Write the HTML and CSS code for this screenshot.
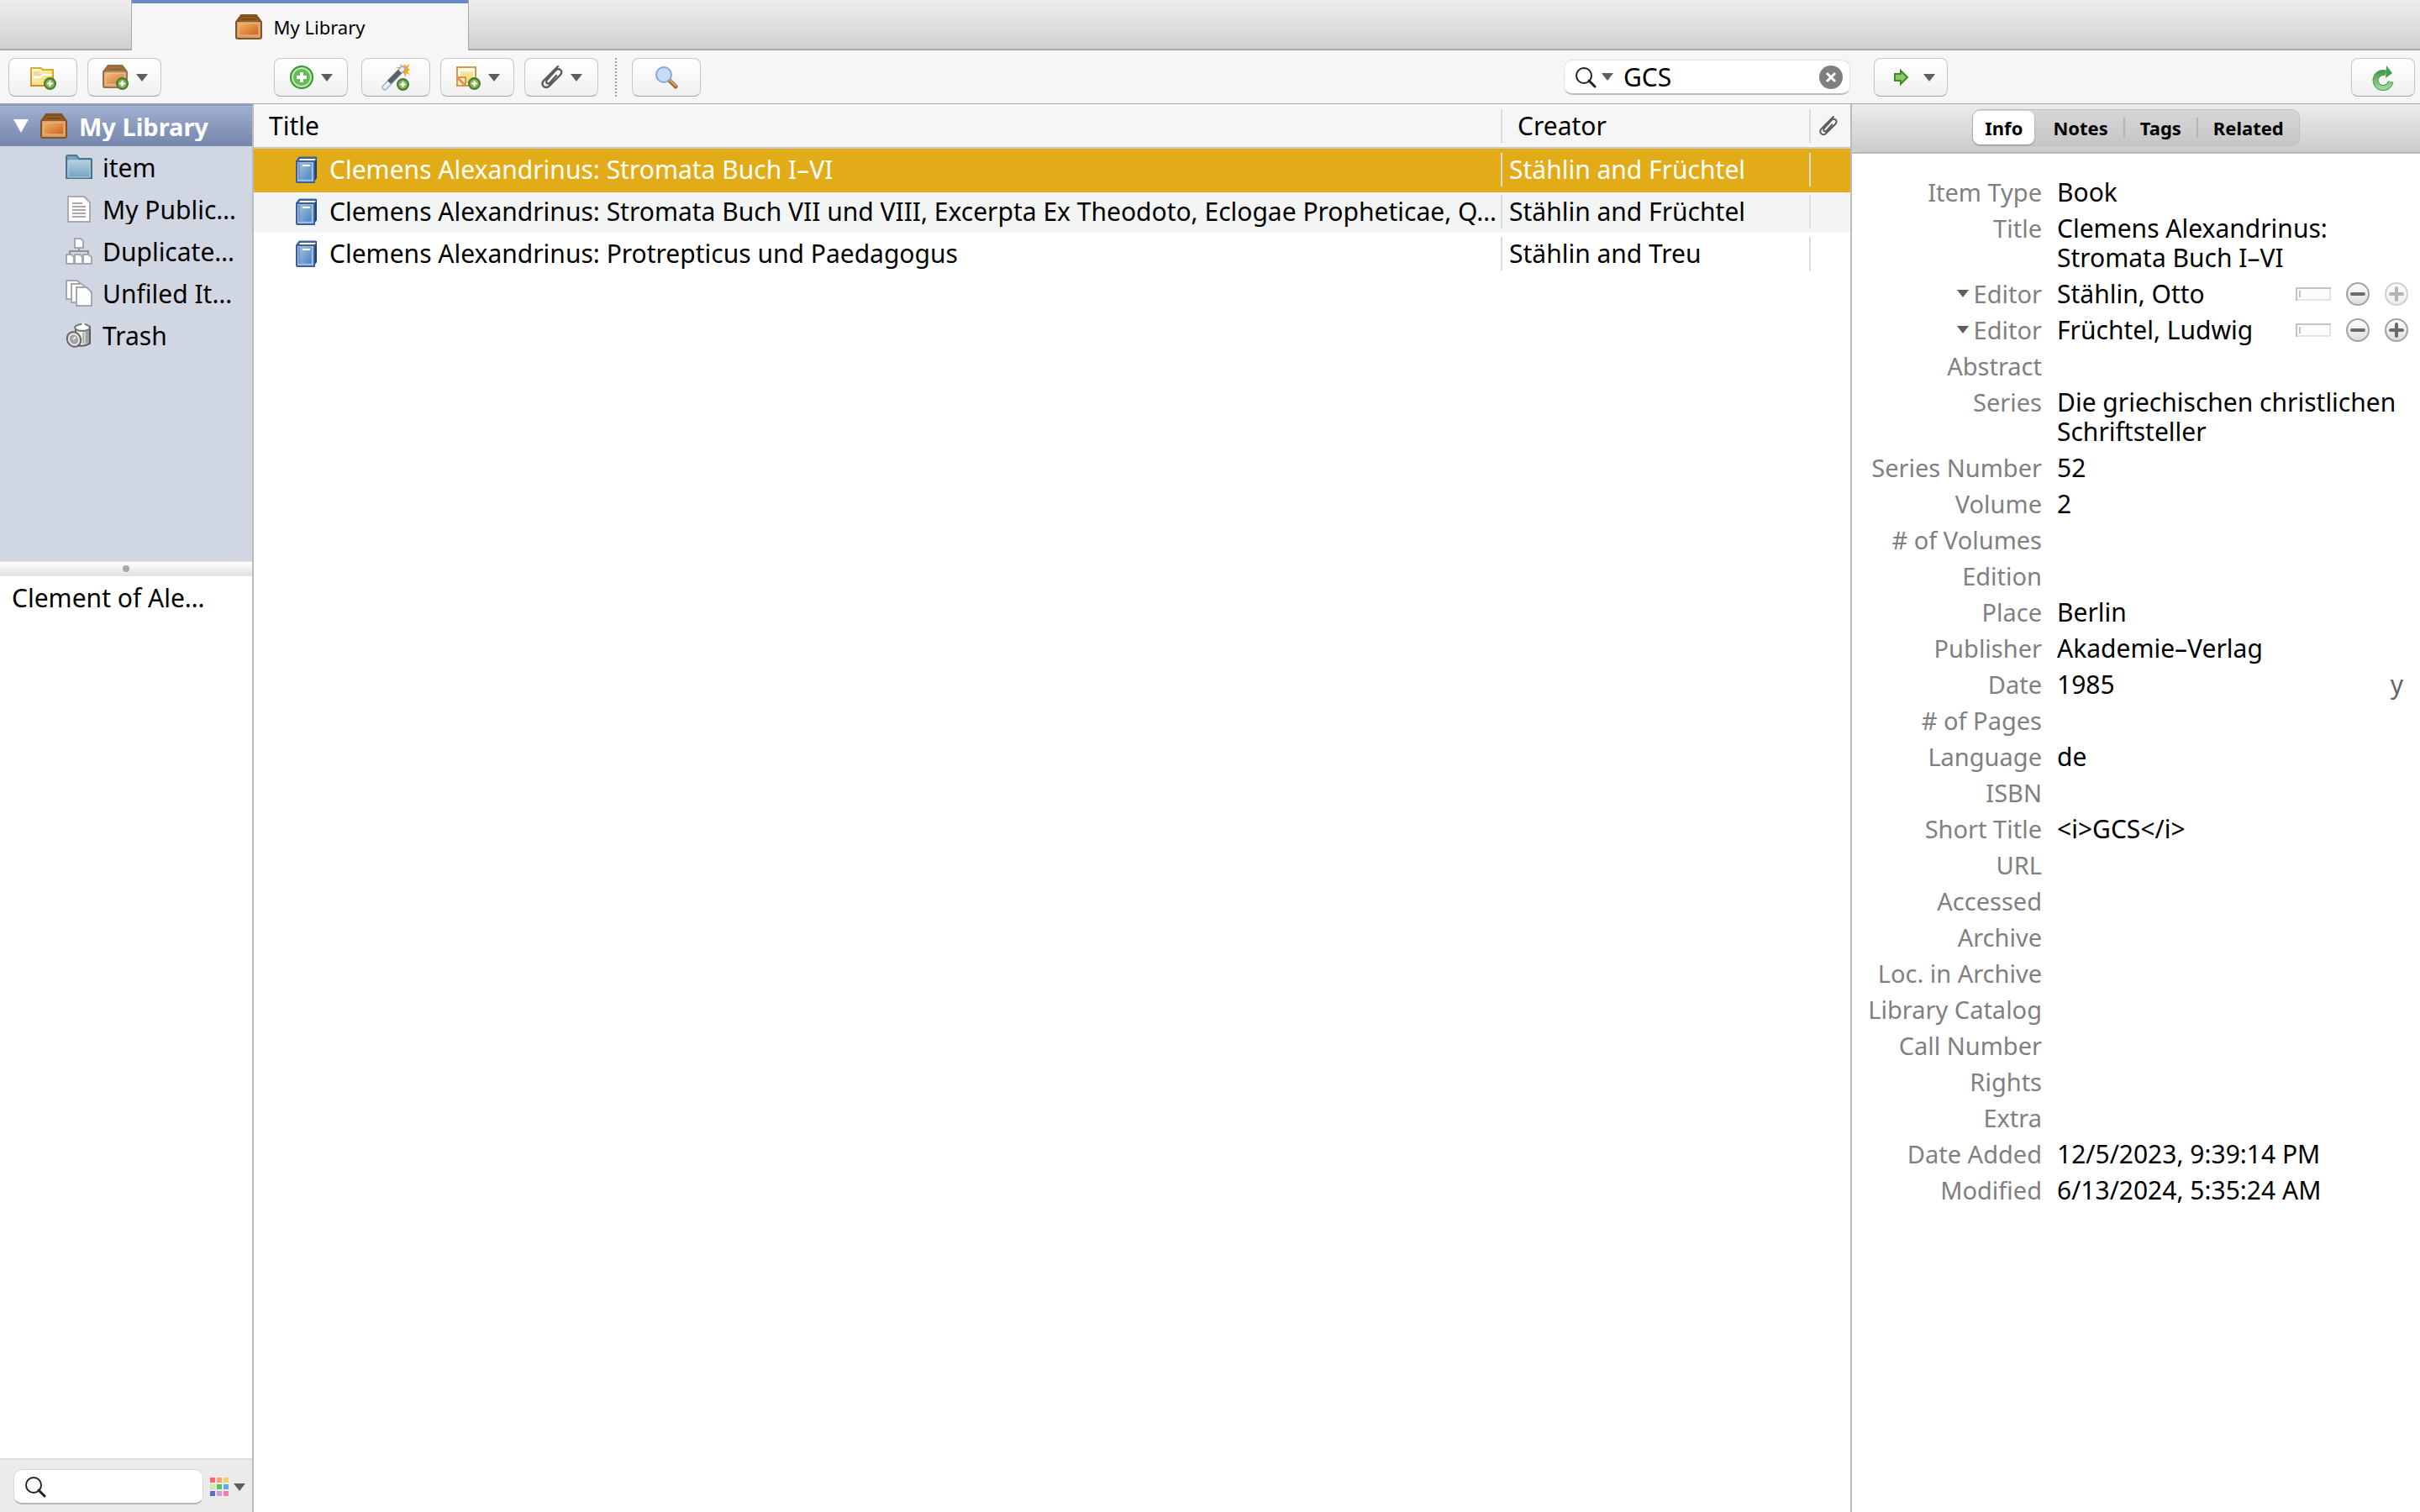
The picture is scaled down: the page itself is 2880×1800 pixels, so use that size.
FILE: index.html
```html
<!DOCTYPE html>
<html lang="en">
<head>
    <meta charset="UTF-8">
    <meta name="viewport" content="width=device-width, initial-scale=1.0">
    <title>My Library</title>
    <link rel="stylesheet" href="styles.css">
</head>
<body>
    <!-- Shared icons -->
    <svg class="icon-defs" aria-hidden="true">
        <defs>
            <linearGradient id="boxFill" x1="0" y1="0" x2="1" y2="1">
                <stop offset="0" stop-color="#edb560"/>
                <stop offset="1" stop-color="#cf6026"/>
            </linearGradient>
            <linearGradient id="bookFill" x1="0" y1="0" x2="1" y2="1">
                <stop offset="0" stop-color="#a3c3dd"/>
                <stop offset="1" stop-color="#4a83c4"/>
            </linearGradient>
            <linearGradient id="folderFill" x1="0" y1="0" x2="0" y2="1">
                <stop offset="0" stop-color="#b4d0e0"/>
                <stop offset="1" stop-color="#74a5c2"/>
            </linearGradient>
            <linearGradient id="yellowFill" x1="0" y1="0" x2="1" y2="1">
                <stop offset="0" stop-color="#fffdf0"/>
                <stop offset="1" stop-color="#f0d23c"/>
            </linearGradient>
            <linearGradient id="yellowEdge" x1="0" y1="0" x2="0" y2="1">
                <stop offset="0" stop-color="#d8b030"/>
                <stop offset="1" stop-color="#dc8a28"/>
            </linearGradient>
            <linearGradient id="noteFill" x1="0" y1="0" x2="0" y2="1">
                <stop offset="0" stop-color="#f6eaa6"/>
                <stop offset="1" stop-color="#ecd465"/>
            </linearGradient>
            <linearGradient id="greenFill" x1="0" y1="0" x2="0" y2="1">
                <stop offset="0" stop-color="#4d9e52"/>
                <stop offset="1" stop-color="#9fd694"/>
            </linearGradient>
            <linearGradient id="canFill" x1="0" y1="0" x2="1" y2="0">
                <stop offset="0" stop-color="#dcdcdc"/>
                <stop offset="0.4" stop-color="#f4f4f4"/>
                <stop offset="1" stop-color="#8e8e8e"/>
            </linearGradient>
            <linearGradient id="knobFill" x1="0" y1="0" x2="0" y2="1">
                <stop offset="0" stop-color="#ffffff"/>
                <stop offset="1" stop-color="#dcdcdc"/>
            </linearGradient>
        </defs>
        <symbol id="icon-box" viewBox="0 0 32 30">
            <path d="M1 9 7 1h18l6 8v18q0 2-2 2H3q-2 0-2-2z" fill="#d99a6c" stroke="#85561b" stroke-width="2"/>
            <path d="M2 9 7 2h18l5 7z" fill="#7c4a14"/>
            <path d="M5 8 8 4h16l3 4z" fill="none" stroke="#a97335" stroke-width="1"/>
            <path d="M4 11h24v14H4z" fill="url(#boxFill)" stroke="#e8bd8f" stroke-width="1"/>
        </symbol>
        <symbol id="icon-badge" viewBox="0 0 14 14">
            <circle cx="7" cy="7" r="6" fill="#86b35c" stroke="#477c2c" stroke-width="2"/>
            <path d="M7 4v6M4 7h6" stroke="#fff" stroke-width="2"/>
        </symbol>
        <symbol id="icon-book" viewBox="0 0 26 32">
            <path d="M4 1h21v25l-3 4V6H2z" fill="#233d66"/>
            <path d="M1 5 4 1h20v4l-3 3H1z" fill="#40659f" stroke="#3b5f9b" stroke-width="1"/>
            <path d="M5 3h19l-2 2H4z" fill="#fff"/>
            <path d="M1 6h21v25H2q-1 0-1-1z" fill="#a5c4e3" stroke="#3b5f9b" stroke-width="2"/>
            <path d="M4 8h15v20H4z" fill="url(#bookFill)" stroke="#88aed6" stroke-width="1"/>
            <path d="M4 8v20" stroke="#4f7aa8" stroke-width="1"/>
            <path d="M8 11h9" stroke="#fff" stroke-width="2"/>
        </symbol>
        <symbol id="icon-clip" viewBox="0 0 26 28">
            <path d="M20 1 3 18c-4 5 1 10 6 7L23 11c4-5-2-9-6-5L7 17c-3 4 2 6 4 3l7-8" fill="none" stroke="#5c5c5c" stroke-width="2.4" stroke-linecap="round"/>
        </symbol>
        <symbol id="icon-find" viewBox="0 0 26 26">
            <circle cx="11" cy="11" r="9" fill="none" stroke="#222" stroke-width="2"/>
            <path d="m17 17 7 7" stroke="#222" stroke-width="3" stroke-linecap="round"/>
        </symbol>
        <symbol id="icon-caret" viewBox="0 0 14 9">
            <path d="M0 0h14L7 9z" fill="#5e5e5e"/>
        </symbol>
        <symbol id="icon-minus" viewBox="0 0 28 28">
            <circle cx="14" cy="14" r="13" fill="url(#knobFill)" stroke="#a3a3a3" stroke-width="2"/>
            <path d="M7 14h14" stroke="#6b6b6b" stroke-width="4" stroke-linecap="round"/>
        </symbol>
        <symbol id="icon-plus" viewBox="0 0 28 28">
            <circle cx="14" cy="14" r="13" fill="url(#knobFill)" stroke="#a3a3a3" stroke-width="2"/>
            <path d="M7 14h14M14 7v14" stroke="#6b6b6b" stroke-width="4" stroke-linecap="round"/>
        </symbol>
        <symbol id="icon-field" viewBox="0 0 42 16">
            <path d="M1 1h40v14H1z" fill="#fcfcfc" stroke="#e4e4e4" stroke-width="2"/>
            <path d="M1 16V1h41" fill="none" stroke="#c4c4c4" stroke-width="2"/>
            <path d="M5 4v8" stroke="#c4c4c4" stroke-width="2"/>
        </symbol>
    </svg>

    <!-- Tabs -->
    <header class="tab-bar">
        <div class="tab-spacer"></div>
        <button class="tab">
            <svg class="icon-library"><use href="#icon-box"/></svg>
            My Library
        </button>
        <div class="tab-filler"></div>
    </header>

    <!-- Toolbar -->
    <div class="toolbar">
        <div class="tools tools-collections">
            <button class="tool" aria-label="New Collection">
                <svg width="32" height="30" viewBox="0 0 32 30">
                    <path d="M2 25V4h12l2 2h12v19z" fill="url(#yellowFill)" stroke="url(#yellowEdge)" stroke-width="2"/>
                    <path d="M5 13V8h7v3h6v2z" fill="#f0d795"/>
                    <path d="M5 15h8l3-3h11" fill="none" stroke="#fff" stroke-width="2"/>
                    <use href="#icon-badge" x="17" y="15" width="15" height="15"/>
                </svg>
            </button>
            <button class="tool tool-menu" aria-label="New Library">
                <svg width="32" height="30" viewBox="0 0 32 30">
                    <use href="#icon-box" x="0" y="0" width="32" height="28" opacity="0.85"/>
                    <use href="#icon-badge" x="17" y="15" width="15" height="15"/>
                </svg>
                <svg class="caret"><use href="#icon-caret"/></svg>
            </button>
        </div>
        <div class="tools tools-items">
            <button class="tool tool-menu tool-add" aria-label="New Item">
                <svg width="28" height="28" viewBox="0 0 28 28">
                    <circle cx="14" cy="14" r="13" fill="#bfe5b2" stroke="#38962e" stroke-width="2"/>
                    <circle cx="14" cy="14" r="10" fill="#66bb57"/>
                    <path d="M14 8v12M8 14h12" stroke="#fff" stroke-width="4"/>
                </svg>
                <svg class="caret"><use href="#icon-caret"/></svg>
            </button>
            <button class="tool" aria-label="Add Item by Identifier">
                <svg width="34" height="32" viewBox="0 0 34 32">
                    <path d="m24 7-7-3 6 0-1-4 4 3 2-3 1 3 5-3-3 5 3 2-3 2 3 4-5-2 0 5z" fill="#f7a51d"/>
                    <path d="M4 28 25 6" stroke="#9db4c8" stroke-width="7" stroke-linecap="round"/>
                    <path d="M4 28 25 6" stroke="#e9f1f7" stroke-width="4" stroke-linecap="round"/>
                    <path d="M9 22 22 9" stroke="#5d5f63" stroke-width="6"/>
                    <use href="#icon-badge" x="18" y="17" width="15" height="15"/>
                </svg>
            </button>
            <button class="tool tool-menu" aria-label="New Note">
                <svg width="30" height="30" viewBox="0 0 30 30">
                    <path d="M2 3h22v22H2z" fill="#fffbe8" stroke="#dc9550" stroke-width="2"/>
                    <path d="M6 8h15v14H6z" fill="url(#noteFill)"/>
                    <path d="M2 15h10v10H2z" fill="#fbead2" stroke="#dc9550" stroke-width="2"/>
                    <path d="m3 16 8 8" stroke="#dc9550" stroke-width="3"/>
                    <use href="#icon-badge" x="15" y="15" width="15" height="15"/>
                </svg>
                <svg class="caret"><use href="#icon-caret"/></svg>
            </button>
            <button class="tool tool-menu" aria-label="Add Attachment">
                <svg width="26" height="28"><use href="#icon-clip"/></svg>
                <svg class="caret"><use href="#icon-caret"/></svg>
            </button>
            <div class="separator"></div>
            <button class="tool" aria-label="Advanced Search">
                <svg width="28" height="28" viewBox="0 0 28 28">
                    <path d="m18 18 7 7" stroke="#a06a30" stroke-width="5" stroke-linecap="round"/>
                    <path d="m19 18 6 6" stroke="#d6a873" stroke-width="2" stroke-linecap="round"/>
                    <circle cx="11" cy="11" r="9" fill="#c6dbf5" stroke="#8aa6d3" stroke-width="2"/>
                </svg>
            </button>
            <div class="search">
                <svg width="26" height="26"><use href="#icon-find"/></svg>
                <svg class="caret"><use href="#icon-caret"/></svg>
                <input class="search-input" type="text" value="GCS" aria-label="Search">
                <button class="clear" aria-label="Clear">
                    <svg width="28" height="28" viewBox="0 0 28 28">
                        <circle cx="14" cy="14" r="14" fill="#7f7f7f"/>
                        <path d="m9 9 10 10M19 9 9 19" stroke="#fff" stroke-width="3"/>
                    </svg>
                </button>
            </div>
        </div>
        <div class="tools tools-item">
            <button class="tool tool-menu tool-locate" aria-label="Locate">
                <svg width="20" height="20" viewBox="0 0 20 20">
                    <path d="M2 6h7V2l8 8-8 8v-4H2z" fill="#8cc66f" stroke="#3f8d1d" stroke-width="2"/>
                </svg>
                <svg class="caret"><use href="#icon-caret"/></svg>
            </button>
            <button class="tool tool-sync" aria-label="Sync">
                <svg width="26" height="32" viewBox="0 0 26 32">
                    <path d="M22 21a9 9 0 1 1-6-10" fill="none" stroke="#4a9a4f" stroke-width="7"/>
                    <path d="M22 21a9 9 0 1 1-6-10" fill="none" stroke="url(#greenFill)" stroke-width="5"/>
                    <path d="m17 2 7 9-8 6z" fill="#4a9a4f"/>
                </svg>
            </button>
        </div>
    </div>

    <main class="panes">
        <!-- Collections and tags -->
        <aside class="sidebar">
            <ul class="collections">
                <li class="collection collection-root">
                    <svg class="twisty" viewBox="0 0 18 16"><path d="M0 0h18L9 16z" fill="#fff"/></svg>
                    <svg class="icon-library"><use href="#icon-box"/></svg>
                    <span>My Library</span>
                </li>
                <li class="collection">
                    <svg class="icon-row" viewBox="0 0 32 32">
                        <path d="M1 29V4q0-2 2-2h10l3 4h14q1 0 1 1v22z" fill="#7ba2bc" stroke="#4a7490" stroke-width="2"/>
                        <path d="M3 8h26v20H3z" fill="url(#folderFill)" stroke="#bcd6e4" stroke-width="1"/>
                    </svg>
                    <span>item</span>
                </li>
                <li class="collection">
                    <svg class="icon-row" viewBox="0 0 32 32">
                        <path d="M3 1h19l7 7v23H3z" fill="#fff" stroke="#a6aab2" stroke-width="2"/>
                        <path d="M8 9h12M8 13h16M8 17h16M8 21h16M8 25h16" stroke="#a9a9a9" stroke-width="2"/>
                    </svg>
                    <span>My Public…</span>
                </li>
                <li class="collection">
                    <svg class="icon-row" viewBox="0 0 32 32">
                        <path d="M16 12v5M5 19v-3h22v3" fill="none" stroke="#8d9097" stroke-width="2"/>
                        <path d="M11 1h7l3 3v8H11zM1 20h6l3 3v8H1zM11 20h6l3 3v8h-9zM21 20h6l4 3v8H21z" fill="#fff" stroke="#a3a7b0" stroke-width="2"/>
                    </svg>
                    <span>Duplicate…</span>
                </li>
                <li class="collection">
                    <svg class="icon-row" viewBox="0 0 32 32">
                        <path d="M1 1h13l5 5v17H1z" fill="#fff" stroke="#a3a7b0" stroke-width="2"/>
                        <path d="M7 5h12l6 5v17H7z" fill="#fff" stroke="#a3a7b0" stroke-width="2"/>
                        <path d="M13 9h12l6 6v16H13z" fill="#fff" stroke="#a3a7b0" stroke-width="2"/>
                    </svg>
                    <span>Unfiled It…</span>
                </li>
                <li class="collection">
                    <svg class="icon-row" viewBox="0 0 32 32">
                        <path d="M12 6v21q8 4 17-1V6z" fill="url(#canFill)" stroke="#5c5c5c" stroke-width="2"/>
                        <path d="M21 13v13M25 12v13" stroke="#8a8a8a" stroke-width="1"/>
                        <ellipse cx="20" cy="7" rx="9" ry="4" fill="#eee" stroke="#777" stroke-width="2"/>
                        <path d="m15 7 4-3 2-4 2 4 4 3-6 2z" fill="#fff"/>
                        <ellipse cx="10" cy="21" rx="8" ry="9" fill="#e0e0e0" stroke="#666" stroke-width="2" transform="rotate(-30 10 21)"/>
                        <ellipse cx="10" cy="21" rx="4" ry="5" fill="#a8a8a8" stroke="#888" stroke-width="1" transform="rotate(-30 10 21)"/>
                        <path d="m9 21 3-3" stroke="#eee" stroke-width="2"/>
                    </svg>
                    <span>Trash</span>
                </li>
            </ul>
            <div class="splitter"><span class="grip"></span></div>
            <div class="tags">
                <div class="tag">Clement of Ale…</div>
            </div>
            <div class="tag-footer">
                <label class="tag-search">
                    <svg width="26" height="26"><use href="#icon-find"/></svg>
                    <input class="search-input" type="text" aria-label="Filter tags">
                </label>
                <button class="swatches" aria-label="Tag actions">
                    <svg width="22" height="22" viewBox="0 0 22 22">
                        <path d="M0 0h6v6H0z" fill="#ff6666"/>
                        <path d="M8 0h6v6H8z" fill="#ffa366"/>
                        <path d="M16 0h6v6h-6z" fill="#f0d35c"/>
                        <path d="M0 8h6v6H0z" fill="#cfe8a6"/>
                        <path d="M8 8h6v6H8z" fill="#4dc964"/>
                        <path d="M16 8h6v6h-6z" fill="#5cabe8"/>
                        <path d="M0 16h6v6H0z" fill="#5577b0"/>
                        <path d="M8 16h6v6H8z" fill="#d597dc"/>
                        <path d="M16 16h6v6h-6z" fill="#ff75ad"/>
                    </svg>
                    <svg class="caret"><use href="#icon-caret"/></svg>
                </button>
            </div>
        </aside>

        <!-- Items -->
        <section class="items">
            <table class="item-table">
                <colgroup>
                    <col>
                    <col class="col-creator">
                    <col class="col-attachment">
                </colgroup>
                <thead>
                    <tr>
                        <th><div class="head-cell">Title</div></th>
                        <th><div class="head-cell divided">Creator</div></th>
                        <th><div class="head-cell divided clip-cell"><svg width="22" height="24" aria-label="Attachments"><use href="#icon-clip"/></svg></div></th>
                    </tr>
                </thead>
                <tbody>
                    <tr class="selected">
                        <td><div class="cell title-cell"><svg class="icon-book"><use href="#icon-book"/></svg><span>Clemens Alexandrinus: Stromata Buch I–VI</span></div></td>
                        <td><div class="cell divided">Stählin and Früchtel</div></td>
                        <td><div class="cell divided"></div></td>
                    </tr>
                    <tr class="odd">
                        <td><div class="cell title-cell"><svg class="icon-book"><use href="#icon-book"/></svg><span>Clemens Alexandrinus: Stromata Buch VII und VIII, Excerpta Ex Theodoto, Eclogae Propheticae, Q…</span></div></td>
                        <td><div class="cell divided">Stählin and Früchtel</div></td>
                        <td><div class="cell divided"></div></td>
                    </tr>
                    <tr>
                        <td><div class="cell title-cell"><svg class="icon-book"><use href="#icon-book"/></svg><span>Clemens Alexandrinus: Protrepticus und Paedagogus</span></div></td>
                        <td><div class="cell divided">Stählin and Treu</div></td>
                        <td><div class="cell divided"></div></td>
                    </tr>
                </tbody>
            </table>
        </section>

        <!-- Item details -->
        <aside class="details">
            <nav class="detail-tabs">
                <div class="segments">
                    <button class="segment active">Info</button>
                    <button class="segment">Notes</button>
                    <button class="segment ruled">Tags</button>
                    <button class="segment ruled">Related</button>
                </div>
            </nav>
            <dl class="fields">
                <dt>Item Type</dt><dd>Book</dd>
                <dt>Title</dt><dd>Clemens Alexandrinus: Stromata Buch I–VI</dd>
                <dt><svg class="caret-small"><use href="#icon-caret"/></svg>Editor</dt>
                <dd class="creator">
                    <span class="creator-name">Stählin, Otto</span>
                    <button class="mini" aria-label="Switch to single field"><svg width="42" height="16"><use href="#icon-field"/></svg></button>
                    <button class="mini" aria-label="Remove"><svg width="28" height="28"><use href="#icon-minus"/></svg></button>
                    <button class="mini faded" aria-label="Add" disabled><svg width="28" height="28"><use href="#icon-plus"/></svg></button>
                </dd>
                <dt><svg class="caret-small"><use href="#icon-caret"/></svg>Editor</dt>
                <dd class="creator">
                    <span class="creator-name">Früchtel, Ludwig</span>
                    <button class="mini" aria-label="Switch to single field"><svg width="42" height="16"><use href="#icon-field"/></svg></button>
                    <button class="mini" aria-label="Remove"><svg width="28" height="28"><use href="#icon-minus"/></svg></button>
                    <button class="mini" aria-label="Add"><svg width="28" height="28"><use href="#icon-plus"/></svg></button>
                </dd>
                <dt>Abstract</dt><dd></dd>
                <dt>Series</dt><dd>Die griechischen christlichen Schriftsteller</dd>
                <dt>Series Number</dt><dd>52</dd>
                <dt>Volume</dt><dd>2</dd>
                <dt># of Volumes</dt><dd></dd>
                <dt>Edition</dt><dd></dd>
                <dt>Place</dt><dd>Berlin</dd>
                <dt>Publisher</dt><dd>Akademie–Verlag</dd>
                <dt>Date</dt><dd class="date">1985 <span class="date-order">y</span></dd>
                <dt># of Pages</dt><dd></dd>
                <dt>Language</dt><dd>de</dd>
                <dt>ISBN</dt><dd></dd>
                <dt>Short Title</dt><dd>&lt;i&gt;GCS&lt;/i&gt;</dd>
                <dt>URL</dt><dd></dd>
                <dt>Accessed</dt><dd></dd>
                <dt>Archive</dt><dd></dd>
                <dt>Loc. in Archive</dt><dd></dd>
                <dt>Library Catalog</dt><dd></dd>
                <dt>Call Number</dt><dd></dd>
                <dt>Rights</dt><dd></dd>
                <dt>Extra</dt><dd></dd>
                <dt>Date Added</dt><dd>12/5/2023, 9:39:14 PM</dd>
                <dt>Modified</dt><dd>6/13/2024, 5:35:24 AM</dd>
            </dl>
        </aside>
    </main>
</body>
</html>
```
FILE: styles.css
```css
/* Basic Reset & Body Styling */
* {
    margin: 0;
    padding: 0;
    box-sizing: border-box;
}

body {
    display: flex;
    flex-direction: column;
    height: 100vh;
    overflow: hidden;
    font-family: 'Lucida Grande', 'Noto Sans', sans-serif;
    font-size: 30px;
    line-height: 35px;
    color: #000;
    background-color: #fff;
}

button,
input {
    font: inherit;
    color: inherit;
    border: none;
    background: none;
}

svg {
    display: block;
    flex: none;
}

.icon-defs {
    position: absolute;
    width: 0;
    height: 0;
}

.icon-library {
    width: 32px;
    height: 30px;
}

.icon-row {
    width: 32px;
    height: 32px;
}

.icon-book {
    width: 26px;
    height: 32px;
}

.caret {
    width: 14px;
    height: 9px;
}

.caret-small {
    width: 14px;
    height: 9px;
}

/* Tab Bar */
.tab-bar {
    display: flex;
    height: 60px;
    flex: none;
    background-color: #f6f6f6;
}

.tab-spacer,
.tab-filler {
    background: linear-gradient(to bottom, #eee, #d1d1d1);
    border-bottom: 2px solid #a9a9a9;
}

.tab-spacer {
    width: 157px;
    border-right: 1px solid #a9a9a9;
}

.tab-filler {
    flex: 1;
    border-left: 1px solid #a9a9a9;
}

.tab {
    display: flex;
    align-items: center;
    justify-content: center;
    gap: 14px;
    width: 400px;
    border-top: 4px solid #668ac6;
    font-size: 22px;
}

/* Toolbar */
.toolbar {
    display: flex;
    height: 64px;
    flex: none;
    background-color: #f6f6f6;
    border-bottom: 1px solid #a9a9a9;
}

.tools {
    display: flex;
    align-items: center;
    gap: 12px;
    padding-top: 1px;
}

.tools-collections {
    width: 302px;
    padding-left: 10px;
}

.tools-items {
    flex: 1;
    padding-left: 24px;
}

.tools-item {
    width: 678px;
    padding: 1px 6px 0 28px;
    justify-content: space-between;
}

.tool {
    display: flex;
    align-items: center;
    justify-content: center;
    gap: 9px;
    width: 82px;
    height: 46px;
    border: 1px solid #c6c6c6;
    border-bottom-color: #a2a2a2;
    border-radius: 8px;
    background: linear-gradient(to bottom, #fff, #f0f0f0);
}

.tool-menu {
    width: 88px;
}

.tool-add {
    margin-right: 4px;
}

.tool-locate {
    gap: 16px;
    padding-left: 8px;
}

.tool-sync {
    width: 76px;
}

.separator {
    height: 46px;
    margin: 0 6px 0 8px;
    border-left: 2px dotted #a0a0a0;
}

.search {
    display: flex;
    align-items: center;
    gap: 6px;
    width: 341px;
    height: 42px;
    margin-left: auto;
    padding: 0 8px 0 12px;
    border: 1px solid #e2e2e2;
    border-bottom: 2px solid #bdbdbd;
    border-radius: 10px;
    background-color: #fff;
}

.search-input {
    flex: 1;
    min-width: 0;
    height: 38px;
    padding-left: 6px;
    outline: none;
}

/* Panes */
.panes {
    display: flex;
    flex: 1;
    min-height: 0;
}

.sidebar {
    display: flex;
    flex-direction: column;
    width: 302px;
    border-right: 2px solid #bbb;
}

.collections {
    height: 544px;
    list-style: none;
    background-color: #d1d7e2;
}

.collection {
    display: flex;
    align-items: center;
    gap: 12px;
    height: 50px;
    padding: 0 12px 0 78px;
}

.collection span,
.tag,
.title-cell span {
    overflow: hidden;
    white-space: nowrap;
    text-overflow: ellipsis;
}

.collection-root {
    gap: 14px;
    padding-left: 16px;
    border-top: 2px solid #8a9bc2;
    background: linear-gradient(to bottom, #a0b0d1, #7585ac);
    color: #fff;
    font-size: 29px;
    font-weight: bold;
}

.twisty {
    width: 18px;
    height: 16px;
}

.splitter {
    display: flex;
    align-items: center;
    justify-content: center;
    height: 18px;
    border-top: 1px solid #e4e4e4;
    border-bottom: 1px solid #e4e4e4;
    background: linear-gradient(to bottom, #fff, #e2e2e2);
}

.grip {
    width: 8px;
    height: 8px;
    border-radius: 50%;
    background-color: #a8a8a8;
}

.tags {
    flex: 1;
    padding: 8px 14px 0;
}

.tag-footer {
    display: flex;
    align-items: center;
    gap: 8px;
    height: 64px;
    padding: 2px 8px 0 16px;
    border-top: 2px solid #dcdcdc;
    background-color: #ebebeb;
}

.tag-search {
    display: flex;
    align-items: center;
    flex: 1;
    min-width: 0;
    height: 42px;
    padding-left: 12px;
    border: 1px solid #d8d8d8;
    border-bottom: 2px solid #b3b3b3;
    border-radius: 10px;
    background-color: #fff;
}

.swatches {
    display: flex;
    align-items: center;
    gap: 6px;
}

/* Item Table */
.items {
    flex: 1;
    min-width: 0;
}

.item-table {
    width: 100%;
    table-layout: fixed;
    border-collapse: separate;
    border-spacing: 0;
}

.col-creator {
    width: 367px;
}

.col-attachment {
    width: 49px;
}

.item-table th {
    height: 53px;
    background-color: #f6f6f6;
    border-bottom: 2px solid #c8c8c8;
    font-weight: normal;
    text-align: left;
}

.head-cell {
    height: 40px;
    padding-left: 18px;
    line-height: 40px;
}

.cell {
    height: 40px;
    padding-left: 8px;
    line-height: 40px;
}

.item-table td {
    height: 50px;
}

.divided {
    border-left: 2px solid #dcdcdc;
}

.clip-cell {
    display: flex;
    align-items: center;
    padding-left: 10px;
}

.title-cell {
    display: flex;
    align-items: center;
    gap: 14px;
    padding-left: 50px;
}

.odd td {
    background-color: #f3f5f5;
}

.selected td {
    position: relative;
    background-color: #e1ac18;
    box-shadow: 0 2px 0 #e1ac18;
    color: #fff;
}

/* Details */
.details {
    width: 678px;
    border-left: 2px solid #bbb;
}

.detail-tabs {
    display: flex;
    align-items: center;
    justify-content: center;
    height: 59px;
    padding-bottom: 1px;
    border-bottom: 2px solid #b8b8b8;
    background: linear-gradient(to bottom, #ececec, #cbcbcb);
}

.segments {
    display: flex;
    align-items: center;
    height: 44px;
    border: 1px solid #c0c0c0;
    border-radius: 10px;
    background: linear-gradient(to bottom, #d6d6d6, #c6c6c6);
}

.segment {
    height: 24px;
    padding: 0 18px;
    font-size: 22px;
    line-height: 22px;
    font-weight: bold;
}

.segment.active {
    height: 40px;
    padding: 0 14px;
    margin-right: 4px;
    border-radius: 8px;
    background-color: #fff;
    box-shadow: 0 1px 2px #888;
}

.segment.ruled {
    border-left: 2px solid #b5b5b5;
}

.fields {
    display: grid;
    grid-template-columns: 211px 1fr;
    gap: 8px 18px;
    padding: 28px 14px 0 15px;
}

.fields dt {
    display: flex;
    align-items: center;
    justify-content: flex-end;
    gap: 6px;
    height: 35px;
    font-size: 29px;
    color: #808080;
    white-space: nowrap;
}

.fields dd {
    min-height: 35px;
}

.creator,
.date {
    display: flex;
    align-items: center;
    gap: 18px;
}

.creator-name {
    flex: 1;
}

.mini {
    display: flex;
}

.faded {
    opacity: 0.5;
}

.date {
    justify-content: space-between;
    padding-right: 6px;
}

.date-order {
    color: #666;
}
```
